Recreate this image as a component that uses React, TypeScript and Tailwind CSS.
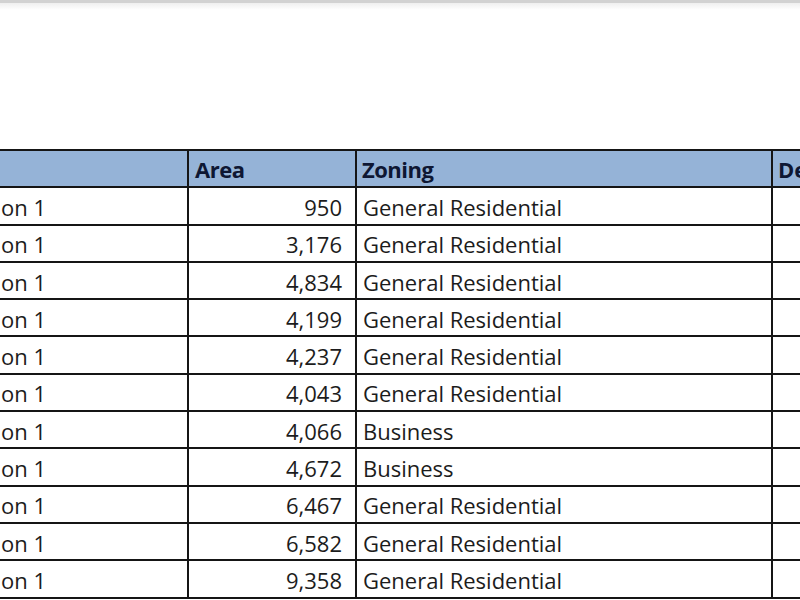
import { FC } from 'react';

type Row = {
  name: string;
  area: string;
  zoning: string;
};

const rows: Row[] = [
  { name: 'on 1', area: '950', zoning: 'General Residential' },
  { name: 'on 1', area: '3,176', zoning: 'General Residential' },
  { name: 'on 1', area: '4,834', zoning: 'General Residential' },
  { name: 'on 1', area: '4,199', zoning: 'General Residential' },
  { name: 'on 1', area: '4,237', zoning: 'General Residential' },
  { name: 'on 1', area: '4,043', zoning: 'General Residential' },
  { name: 'on 1', area: '4,066', zoning: 'Business' },
  { name: 'on 1', area: '4,672', zoning: 'Business' },
  { name: 'on 1', area: '6,467', zoning: 'General Residential' },
  { name: 'on 1', area: '6,582', zoning: 'General Residential' },
  { name: 'on 1', area: '9,358', zoning: 'General Residential' },
];

const cell = 'border-2 border-[#151515] p-0 h-[37.3px] align-middle';

const App: FC = () => {
  return (
    <div
      className="w-[800px] h-[600px] overflow-hidden bg-white text-[#1c1c1c]"
      style={{ fontFamily: '"Open Sans", Lato, sans-serif' }}
    >
      {/* window edge */}
      <div className="h-[3px] bg-[#d2d2d2]" />
      <div className="h-[7px] bg-gradient-to-b from-[#efefef] to-white" />

      <div className="mt-[140px] w-[820px]">
        <table className="border-collapse table-fixed w-[820px] -mt-[1px] text-[22px] leading-none">
          <colgroup>
            <col className="w-[188px]" />
            <col className="w-[168px]" />
            <col className="w-[416px]" />
            <col className="w-[48px]" />
          </colgroup>
          <thead>
            <tr className="bg-[#95b3d7] text-[#0e1733] font-bold">
              <th className={`${cell} border-l-0 text-left`} />
              <th className={`${cell} text-left pl-[6px] tracking-[-0.5px]`}>Area</th>
              <th className={`${cell} text-left pl-[5px] tracking-[-0.5px]`}>Zoning</th>
              <th className={`${cell} text-left pl-[5px] whitespace-nowrap`}>Dev</th>
            </tr>
          </thead>
          <tbody>
            {rows.map((row, i) => (
              <tr key={i}>
                <td className={`${cell} border-l-0 pl-[1px] pt-[2px]`}>{row.name}</td>
                <td className={`${cell} text-right pr-[13px] pt-[2px]`}>{row.area}</td>
                <td className={`${cell} pl-[6px] pt-[2px]`}>{row.zoning}</td>
                <td className={cell} />
              </tr>
            ))}
          </tbody>
        </table>
      </div>
    </div>
  );
};

export default App;
